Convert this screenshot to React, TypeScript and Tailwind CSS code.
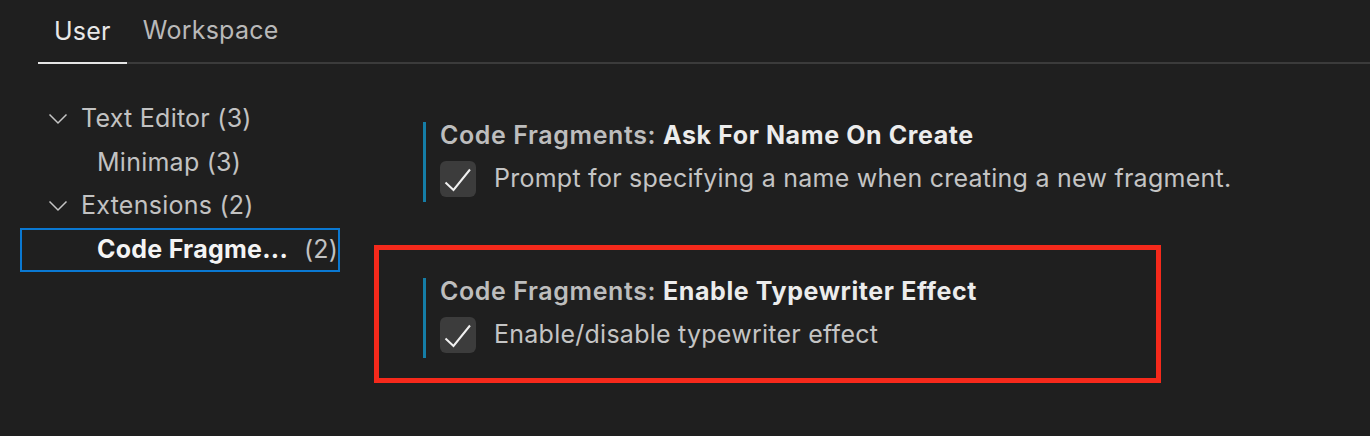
import React from 'react';

const Chevron = () => (
  <svg width="20" height="12" viewBox="0 0 20 12" fill="none" className="shrink-0">
    <path d="M1.5 1.5 L10 10 L18.5 1.5" stroke="#c5c5c5" strokeWidth="1.5" />
  </svg>
);

const CheckBox = () => (
  <div className="w-9 h-9 rounded-[6px] bg-[#3c3c3c] flex items-center justify-center shrink-0">
    <svg width="36" height="36" viewBox="0 0 36 36" fill="none">
      <path d="M5.5 21.5 L13.5 29 L30 8.5" stroke="#f0f0f0" strokeWidth="2" />
    </svg>
  </div>
);

interface SettingProps {
  name: string;
  description: string;
  highlighted?: boolean;
}

const Setting: React.FC<SettingProps> = ({ name, description, highlighted }) => (
  <div
    className={`w-[787px] border-[5px] pl-[44px] pt-[28px] pb-[20px] ${
      highlighted ? 'border-[#f5291b]' : 'border-transparent'
    }`}
  >
    <div className="border-l-[3px] border-[#157da6] pl-[14px] h-[80px] flex flex-col">
      <div className="h-[26px] leading-[26px] text-[25px] font-semibold tracking-[0.6px] whitespace-nowrap">
        <span className="text-[#bdbdbd]">Code Fragments: </span>
        <span className="text-[#ececec] font-bold">{name}</span>
      </div>
      <div className="flex items-center mt-[12px] gap-[18px]">
        <CheckBox />
        <span className="text-[25px] tracking-[0.25px] text-[#c4c4c4] whitespace-nowrap">{description}</span>
      </div>
    </div>
  </div>
);

const App: React.FC = () => {
  return (
    <div className="w-[1370px] h-[436px] bg-[#1f1f1f] overflow-hidden font-['Inter','Noto_Sans',sans-serif] tracking-[0.25px]">
      {/* tabs */}
      <div className="ml-[38px] h-[64px] flex items-end border-b-2 border-[#3b3b3b]">
        <div className="px-4 h-full flex items-center -mb-[2px] border-b-2 border-[#e4e4e4] text-[25px] text-[#e8e8e8]">
          User
        </div>
        <div className="px-4 h-full flex items-center text-[25px] text-[#b9b9b9]">Workspace</div>
      </div>

      <div className="flex">
        {/* tree */}
        <div className="ml-[20px] w-[320px] mt-[33px] text-[25px] text-[#c2c2c2] whitespace-nowrap">
          <div className="h-[43.5px] flex items-center pl-[28px] gap-[13px]">
            <Chevron />
            <span>Text Editor (3)</span>
          </div>
          <div className="h-[43.5px] flex items-center pl-[77px]">Minimap (3)</div>
          <div className="h-[43.5px] flex items-center pl-[28px] gap-[13px]">
            <Chevron />
            <span>Extensions (2)</span>
          </div>
          <div className="h-[44px] flex items-center pl-[75px] border-2 border-[#0a78d2]">
            <span className="font-bold text-[#f4f4f4]">Code Fragme...</span>
            <span className="ml-[16px]">(2)</span>
          </div>
        </div>

        {/* settings */}
        <div className="ml-[34px] mt-[25px] flex flex-col gap-[18px]">
          <Setting
            name="Ask For Name On Create"
            description="Prompt for specifying a name when creating a new fragment."
          />
          <Setting
            name="Enable Typewriter Effect"
            description="Enable/disable typewriter effect"
            highlighted
          />
        </div>
      </div>
    </div>
  );
};

export default App;
